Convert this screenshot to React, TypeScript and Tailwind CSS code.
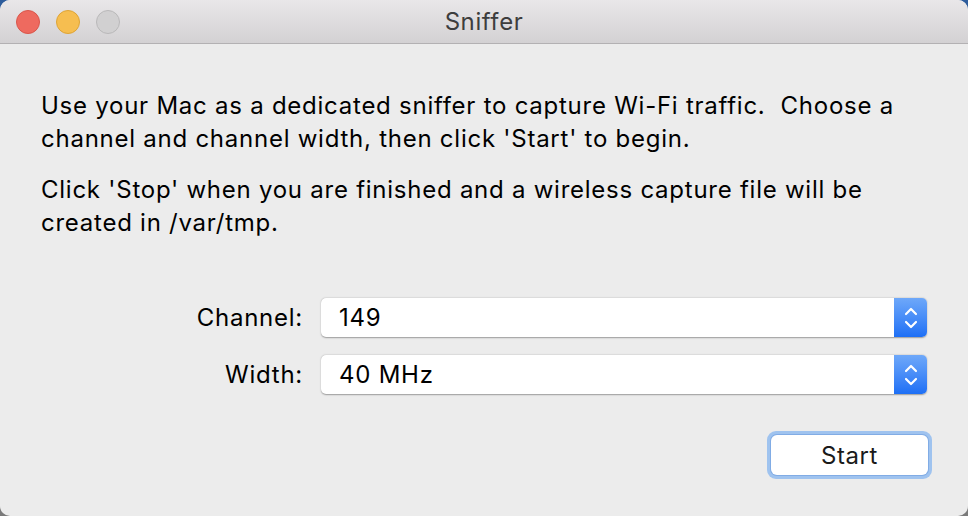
export default function App() {
  const font = { fontFamily: 'Inter, "Liberation Sans", Arial, sans-serif' }

  const Stepper = () => (
    <div className="w-[33px] h-full rounded-r-[5px] bg-gradient-to-b from-[#6ea8f9] to-[#1d6ff5] flex items-center justify-center">
      <svg width="16" height="26" viewBox="0 0 16 26" fill="none" stroke="white" strokeWidth="2.2" strokeLinecap="round" strokeLinejoin="round">
        <path d="M3 9 L8 4 L13 9" />
        <path d="M3 17 L8 22 L13 17" />
      </svg>
    </div>
  )

  return (
    <div className="w-[968px] h-[516px] bg-gradient-to-b from-[#2d5c9c] via-[#8c8c8c] to-[#7a7a7a] tracking-[0.75px]" style={font}>
      <div className="w-full h-full rounded-[10px] overflow-hidden bg-[#ececec] flex flex-col">
        {/* title bar */}
        <div className="h-[44px] shrink-0 relative flex items-center justify-center bg-gradient-to-b from-[#e9e7e9] to-[#d3d1d3] border-b border-[#b3b1b3]">
          <div className="absolute left-[16px] top-[10px] flex gap-[16px]">
            <div className="w-[24px] h-[24px] rounded-full bg-[#ee6a5f] border border-[#d9564b]"></div>
            <div className="w-[24px] h-[24px] rounded-full bg-[#f6be50] border border-[#dea436]"></div>
            <div className="w-[24px] h-[24px] rounded-full bg-[#d1d0d1] border border-[#b9b8b9]"></div>
          </div>
          <span className="text-[24px] text-[#3d3d3d] tracking-[0.6px]">Sniffer</span>
        </div>

        {/* content */}
        <div className="flex-1 pl-[41px] pr-[40px] pt-[45px] text-[24px] leading-[33px] text-black">
          <p>Use your Mac as a dedicated sniffer to capture Wi-Fi traffic.&nbsp; Choose a channel and channel width, then click 'Start' to begin.</p>
          <p className="mt-[18px]">Click 'Stop' when you are finished and a wireless capture file will be created in /var/tmp.</p>

          <div className="mt-[59px] flex flex-col gap-[18px]">
            <div className="flex items-center">
              <span className="w-[280px] text-right pr-[18px]">Channel:</span>
              <div className="w-[606px] h-[39px] flex bg-white rounded-[5px] shadow-[0_0.5px_1.5px_rgba(0,0,0,0.35)]">
                <span className="flex-1 pl-[18px] flex items-center">149</span>
                <Stepper />
              </div>
            </div>
            <div className="flex items-center">
              <span className="w-[280px] text-right pr-[18px]">Width:</span>
              <div className="w-[606px] h-[39px] flex bg-white rounded-[5px] shadow-[0_0.5px_1.5px_rgba(0,0,0,0.35)]">
                <span className="flex-1 pl-[18px] flex items-center">40 MHz</span>
                <Stepper />
              </div>
            </div>
          </div>

          <div className="mt-[37px] flex justify-end">
            <div className="mr-[-4px] p-[4px] rounded-[9px] bg-[#9fc3ef]">
              <button className="w-[157px] h-[40px] bg-white rounded-[6px] text-[24px] text-[#1a1a1a] tracking-[0.6px] shadow-[0_0_0_1px_rgba(100,150,220,0.5)]">Start</button>
            </div>
          </div>
        </div>
      </div>
    </div>
  )
}
